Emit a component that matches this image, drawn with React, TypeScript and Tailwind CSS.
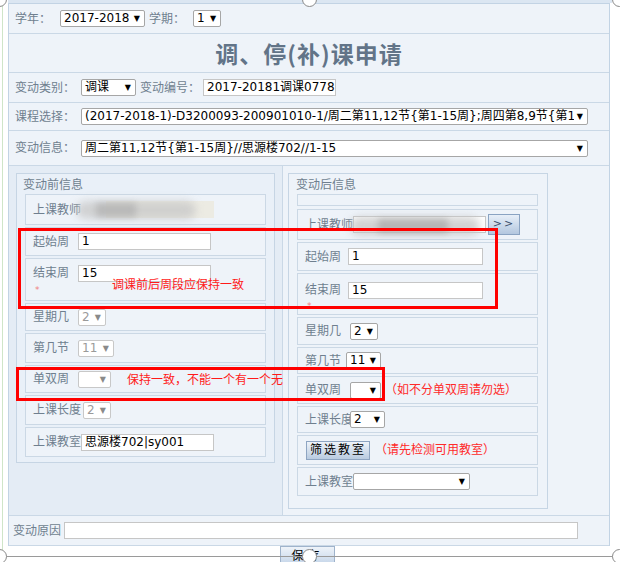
import React from "react";

const LBL = "text-[12px] text-[#6f7f8f] whitespace-nowrap";

function Sel({ cls, text, disabled }: { cls: string; text: string; disabled?: boolean }) {
  return (
    <div
      className={`flex items-center h-[17px] border border-[#a6a6a6] rounded-[2px] bg-white pl-[3px] pr-[4px] text-[12px] leading-[15px] overflow-hidden whitespace-nowrap ${cls} ${
        disabled ? "text-[#9a9a9a] border-[#c8c8c8]" : "text-black"
      }`}
    >
      <span className="min-w-0 flex-1 overflow-hidden">{text}</span>
      <span className={`text-[8px] ml-[3px] shrink-0 ${disabled ? "text-[#8a8a8a]" : "text-black"}`}>▼</span>
    </div>
  );
}

function Inp({ cls, text }: { cls: string; text?: string }) {
  return (
    <div
      className={`h-[17px] border border-[#c6c6c6] bg-white px-[3px] text-[12px] leading-[15px] text-black overflow-hidden whitespace-nowrap ${cls}`}
    >
      {text}
    </div>
  );
}

function Box({ cls, children }: { cls: string; children?: React.ReactNode }) {
  return (
    <div className={`relative border border-[#cbd8e5] bg-[#eef3f9] ${cls}`}>{children}</div>
  );
}

function Handle({ cls }: { cls: string }) {
  return (
    <div className={`absolute w-[15px] h-[15px] rounded-full border border-[#8a8a8a] bg-white ${cls}`} />
  );
}

export default function App() {
  return (
    <div
      className="relative w-[620px] h-[562px] bg-white overflow-hidden"
      style={{ fontFamily: '"DejaVu Sans","Noto Sans CJK SC",sans-serif' }}
    >
      <div className="absolute left-[2px] top-0 w-[1px] h-[556px] bg-[#cfe5c8]" />
      <div className="ml-[8px] w-[604px] h-[3px] bg-[#dbe6f2]" />
      <div className="ml-[8px] w-[602px] border border-t border-[#c2d3e4] border-b-0 bg-[#eef3f9]">
        {/* row 1 */}
        <div className="h-[30px] border-b border-[#cad8e6] flex items-center pl-[6px]">
          <span className={LBL}>学年：</span>
          <Sel cls="w-[85px] ml-[9px]" text="2017-2018" />
          <span className={`${LBL} ml-[4px]`}>学期：</span>
          <Sel cls="w-[28px] ml-[8px]" text="1" />
        </div>
        {/* title */}
        <div className="h-[39px] border-b border-[#cad8e6] flex items-center justify-center">
          <span
            className="text-[23px] font-bold text-[#627488] tracking-[1px]"
            style={{ fontFamily: '"Noto Sans CJK SC",sans-serif' }}
          >
            调、停(补)课申请
          </span>
        </div>
        {/* row 3 */}
        <div className="h-[30px] border-b border-[#cad8e6] flex items-center pl-[6px]">
          <span className={LBL}>变动类别：</span>
          <Sel cls="w-[55px] ml-[6px]" text="调课" />
          <span className={`${LBL} ml-[4px]`}>变动编号：</span>
          <Inp cls="w-[133px] ml-[3px]" text="2017-20181调课0778" />
        </div>
        {/* row 4 */}
        <div className="h-[28px] border-b border-[#cad8e6] flex items-center pl-[6px]">
          <span className={LBL}>课程选择：</span>
          <Sel
            cls="w-[507px] ml-[6px]"
            text="(2017-2018-1)-D3200093-200901010-1/周二第11,12节{第1-15周};周四第8,9节{第1-15周}"
          />
        </div>
        {/* row 5 */}
        <div className="h-[35px] border-b border-[#cad8e6] flex items-center pl-[6px]">
          <span className={LBL}>变动信息：</span>
          <Sel cls="w-[507px] ml-[6px]" text="周二第11,12节{第1-15周}//思源楼702//1-15" />
        </div>
        {/* row 6 */}
        <div className="h-[350px] border-b border-[#cad8e6] flex">
          <div className="w-[274px] border-r border-[#cad8e6] bg-[#e4ecf5] pt-[7px] pl-[7px]">
            <div className="w-[259px] h-[290px] border border-[#c6d5e4] bg-[#e9f0f8] pl-[8px] pt-[2px]">
              <div className={`${LBL} h-[18px] leading-[18px] -ml-[2px]`}>变动前信息</div>
              <div className="flex flex-col gap-[2px] w-[241px]">
                <Box cls="h-[31px] flex items-center pl-[7px]">
                  <span className={LBL}>上课教师</span>
                  <div className="ml-[25px] w-[108px] h-[17px] bg-[#ecebe3]" />
                  <div className="absolute left-[50px] top-[6px] w-[120px] h-[18px] rounded-full bg-[#c9c9c9] blur-[4px] opacity-80" />
                  <div className="absolute left-[70px] top-[8px] w-[40px] h-[14px] bg-[#b0b0b0] blur-[3px] opacity-70" />
                </Box>
                <Box cls="h-[29px] flex items-center pl-[7px]">
                  <span className={`${LBL} w-[45px]`}>起始周</span>
                  <Inp cls="w-[133px]" text="1" />
                </Box>
                <Box cls="h-[43px] flex flex-col pl-[7px]">
                  <div className="flex items-center h-[28px]">
                    <span className={`${LBL} w-[45px]`}>结束周</span>
                    <Inp cls="w-[133px]" text="15" />
                  </div>
                  <span className="text-[9px] leading-[6px] text-[#f08080] ml-[2px]">*</span>
                </Box>
                <Box cls="h-[28px] flex items-center pl-[7px]">
                  <span className={`${LBL} w-[45px]`}>星期几</span>
                  <Sel cls="w-[28px]" text="2" disabled />
                </Box>
                <Box cls="h-[30px] flex items-center pl-[7px]">
                  <span className={`${LBL} w-[45px]`}>第几节</span>
                  <Sel cls="w-[36px]" text="11" disabled />
                </Box>
                <Box cls="h-[28px] flex items-center pl-[7px]">
                  <span className={`${LBL} w-[45px]`}>单双周</span>
                  <Sel cls="w-[33px]" text="" disabled />
                </Box>
                <Box cls="h-[30px] flex items-center pl-[7px]">
                  <span className={LBL}>上课长度</span>
                  <Sel cls="w-[28px] ml-[2px]" text="2" disabled />
                </Box>
                <Box cls="h-[30px] flex items-center pl-[7px]">
                  <span className={LBL}>上课教室</span>
                  <Inp cls="w-[133px]" text="思源楼702|sy001" />
                </Box>
              </div>
            </div>
          </div>
          <div className="flex-1 pt-[7px] pl-[5px]">
            <div className="w-[260px] h-[336px] border border-[#c6d5e4] bg-[#eef3f9] pl-[8px] pt-[2px]">
              <div className={`${LBL} h-[18px] leading-[18px] -ml-[1px]`}>变动后信息</div>
              <div className="flex flex-col gap-[2px] w-[241px]">
                <Box cls="h-[12px] mb-[1px]" />
                <Box cls="h-[31px] flex items-center pl-[7px]">
                  <span className={LBL}>上课教师</span>
                  <Inp cls="w-[133px]" />
                  <div className="ml-[2px] w-[32px] h-[21px] border border-[#8aa3c2] bg-gradient-to-b from-[#e8eff8] to-[#b3c7df] text-[11px] text-[#3a4f6c] flex items-center justify-center tracking-[2px]">
                    &gt;&gt;
                  </div>
                  <div className="absolute left-[52px] top-[7px] w-[130px] h-[18px] rounded-full bg-[#c6c6c6] blur-[4px] opacity-80" />
                  <div className="absolute left-[80px] top-[9px] w-[70px] h-[14px] bg-[#a9a9a9] blur-[3px] opacity-70" />
                </Box>
                <Box cls="h-[29px] flex items-center pl-[7px]">
                  <span className={`${LBL} w-[43px]`}>起始周</span>
                  <Inp cls="w-[135px]" text="1" />
                </Box>
                <Box cls="h-[42px] flex flex-col pl-[7px]">
                  <div className="flex items-center h-[29px] pt-[3px]">
                    <span className={`${LBL} w-[43px]`}>结束周</span>
                    <Inp cls="w-[135px]" text="15" />
                  </div>
                  <span className="text-[9px] leading-[6px] text-[#f08080] ml-[2px]">*</span>
                </Box>
                <Box cls="h-[28px] flex items-center pl-[7px]">
                  <span className={`${LBL} w-[45px]`}>星期几</span>
                  <Sel cls="w-[28px]" text="2" />
                </Box>
                <Box cls="h-[27px] flex items-center pl-[7px]">
                  <span className={`${LBL} w-[41px]`}>第几节</span>
                  <Sel cls="w-[35px]" text="11" />
                </Box>
                <Box cls="h-[28px] flex items-center pl-[7px]">
                  <span className={`${LBL} w-[45px]`}>单双周</span>
                  <Sel cls="w-[31px]" text="" />
                  <span className="text-[12px] text-[#ff2a2a] ml-[4px]">（如不分单双周请勿选）</span>
                </Box>
                <Box cls="h-[27px] flex items-center pl-[7px]">
                  <span className={LBL}>上课长度</span>
                  <Sel cls="w-[35px] -ml-[3px]" text="2" />
                </Box>
                <Box cls="h-[30px] flex items-center pl-[8px]">
                  <div className="w-[64px] h-[19px] border border-[#8ea5c2] bg-gradient-to-b from-[#eef3f9] to-[#b9cbe0] text-[12px] text-black flex items-center justify-center tracking-[2px]">
                    筛选教室
                  </div>
                  <span className="text-[12px] text-[#ff2a2a] ml-[5px]">（请先检测可用教室）</span>
                </Box>
                <Box cls="h-[29px] flex items-center pl-[7px]">
                  <span className={LBL}>上课教室</span>
                  <Sel cls="w-[117px]" text="" />
                </Box>
              </div>
            </div>
          </div>
        </div>
        {/* row 7 */}
        <div className="h-[30px] border-b border-[#cad8e6] flex items-center pl-[4px]">
          <span className={LBL}>变动原因</span>
          <Inp cls="w-[514px] ml-[3px]" />
        </div>
      </div>
      <div className="flex pl-[280px]">
        <div className="w-[55px] h-[20px] border border-[#9fb3cb] bg-gradient-to-b from-[#eef3f9] to-[#c3d4e8] text-[12px] text-black flex items-center justify-center tracking-[4px]">
          保存
        </div>
      </div>

      {/* red annotation boxes */}
      <div className="absolute left-[18px] top-[228px] w-[480px] h-[81px] border-[3px] border-[#ff0000]" />
      <div className="absolute left-[112px] top-[276px] text-[12px] text-[#ff1a1a] whitespace-nowrap">调课前后周段应保持一致</div>
      <div className="absolute left-[16px] top-[367px] w-[369px] h-[34px] border-[3px] border-[#ff0000]" />
      <div className="absolute left-[127px] top-[371px] text-[12px] text-[#ff1a1a] whitespace-nowrap">保持一致，不能一个有一个无</div>

      {/* screenshot frame */}
      <div className="absolute left-[6px] top-[556px] w-[608px] h-[1px] bg-[#9a9a9a]" />
      <Handle cls="-left-[8px] -top-[8px]" />
      <Handle cls="left-[302px] -top-[8px]" />
      <Handle cls="left-[612px] -top-[8px]" />
      <Handle cls="-left-[8px] top-[549px]" />
      <Handle cls="left-[302px] top-[549px]" />
      <Handle cls="left-[612px] top-[549px]" />
    </div>
  );
}
